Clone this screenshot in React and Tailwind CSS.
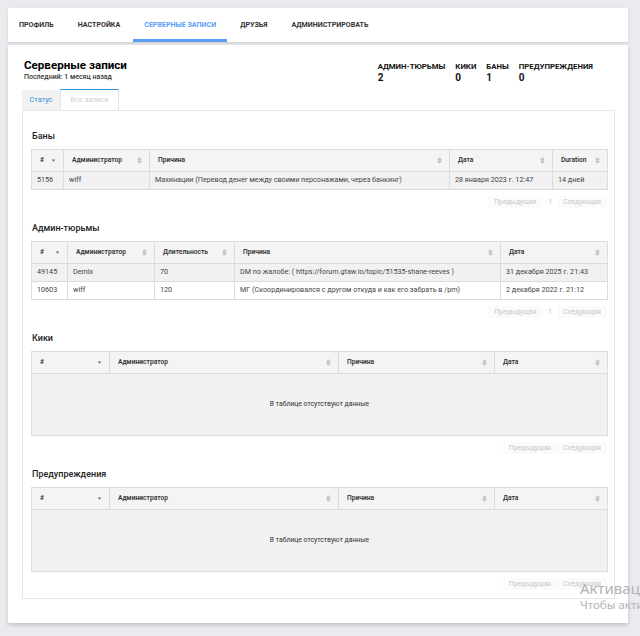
import React from 'react';

const SortBoth = () => (
  <svg width="5" height="7" viewBox="0 0 5 7" className="shrink-0">
    <path d="M2.5 0.7 L4.1 2.8 H0.9 Z" fill="none" stroke="#a0a0a0" strokeWidth="0.7" />
    <path d="M2.5 6.3 L4.1 4.2 H0.9 Z" fill="none" stroke="#a0a0a0" strokeWidth="0.7" />
  </svg>
);

const SortDown = () => (
  <svg width="5" height="7" viewBox="0 0 5 7" className="shrink-0">
    <path d="M0.8 2.6 H4.2 L2.5 4.8 Z" fill="#666" />
  </svg>
);

const DataTable = ({ columns, rows }) => {
  return (
    <table className="w-full table-fixed border-collapse border border-[#dcdcdc] text-[7.2px]">
      <thead className="bg-[#f4f4f4]">
        <tr className="h-[22px]">
          {columns.map((col, idx) => (
            <th
              key={col.label}
              style={{ width: col.w }}
              className="border border-[#dcdcdc] pl-[8px] pr-[7px] text-left text-[6.7px] font-semibold text-[#333]"
            >
              <div className="flex items-center justify-between">
                <span>{col.label}</span>
                {idx === 0 ? <SortDown /> : <SortBoth />}
              </div>
            </th>
          ))}
        </tr>
      </thead>
      <tbody>
        {rows.length === 0 ? (
          <tr className="h-[62px] bg-[#f1f1f1]">
            <td colSpan={columns.length} className="text-center text-[6.8px] text-[#333]">
              В таблице отсутствуют данные
            </td>
          </tr>
        ) : (
          rows.map((row, idx) => (
            <tr key={idx} className={idx % 2 === 0 ? 'h-[18px] bg-[#f1f1f1]' : 'h-[18px] bg-white'}>
              {row.map((cell, cIdx) => (
                <td key={cIdx} className="overflow-hidden whitespace-nowrap border border-[#dcdcdc] px-[5px] text-[#444]">
                  {cell}
                </td>
              ))}
            </tr>
          ))
        )}
      </tbody>
    </table>
  );
};

const Pager = ({ showPage }) => (
  <div className="mt-[6px] flex h-[12px] justify-end gap-[1px] text-[6.8px] text-[#c6c6c6]">
    <span className="flex items-center bg-[#fbfbfb] px-[6px]">Предыдущая</span>
    {showPage && <span className="flex items-center bg-white px-[5px]">1</span>}
    <span className="flex items-center bg-[#fbfbfb] px-[5px]">Следующая</span>
  </div>
);

const Section = ({ title, columns, rows, first }) => (
  <div className={first ? '' : 'mt-[13px]'}>
    <div className="mb-[6px] h-[14px] pl-[1px] text-[9px] font-medium leading-[14px] text-[#222]">{title}</div>
    <DataTable columns={columns} rows={rows} />
    <Pager showPage={rows.length > 0} />
  </div>
);

const navItems = ['Профиль', 'Настройка', 'Серверные записи', 'Друзья', 'Администрировать'];

const stats = [
  { label: 'Админ-тюрьмы', value: 2 },
  { label: 'Кики', value: 0 },
  { label: 'Баны', value: 1 },
  { label: 'Предупреждения', value: 0 },
];

export default function App() {
  return (
    <div
      className="relative h-[636px] w-[640px] overflow-hidden bg-[#eaebef] pl-[8px] pt-[8px]"
      style={{ fontFamily: 'Roboto, "Noto Sans", sans-serif' }}
    >
      <div className="w-[620px]">
        <nav className="flex h-[34px] gap-[2px] bg-white shadow-sm">
          {navItems.map((item) => (
            <div
              key={item}
              className={
                item === 'Серверные записи'
                  ? 'flex items-center border-b-[3px] border-[#5b9cf7] px-[11px] pt-[3px] text-[7.1px] font-bold uppercase text-[#5b9cf7]'
                  : 'flex items-center border-b-[3px] border-transparent px-[11px] pt-[3px] text-[7.1px] font-bold uppercase text-[#333]'
              }
            >
              {item}
            </div>
          ))}
        </nav>

        <div className="mt-[3px] h-[578px] bg-white px-[14px] pt-[13px] shadow-[0_2px_4px_rgba(0,0,0,0.18)]">
          <div className="flex justify-between pr-[21px]">
            <div className="pl-[2px]">
              <h1 className="text-[11.6px] font-bold leading-[15px] text-black">Серверные записи</h1>
              <p className="text-[7px] font-medium leading-[9px] text-[#333]">Последний: 1 месяц назад</p>
            </div>
            <div className="flex gap-[10px] pt-[4px]">
              {stats.map((s) => (
                <div key={s.label} className="text-[#111]">
                  <div className="text-[7.8px] font-bold uppercase leading-[10px]">{s.label}</div>
                  <div className="text-[10px] font-bold leading-[12px]">{s.value}</div>
                </div>
              ))}
            </div>
          </div>

          <div className="mt-[5px] flex h-[21px] items-end">
            <div className="flex h-[20px] w-[38px] items-center justify-center bg-[#f2f2f2] text-[7.3px] text-[#3a8fd8]">
              Статус
            </div>
            <div className="flex h-[21px] w-[59px] items-center justify-center border-x border-t border-[#e3e3e3] border-t-[#2b93dc] bg-white text-[7.3px] text-[#cfcfcf]">
              Все записи
            </div>
          </div>

          <div className="w-[593px] border border-[#e6e6e6] px-[8px] pb-[8px] pt-[18px]">
            <Section
              first
              title="Баны"
              columns={[
                { label: '#', w: 32 },
                { label: 'Администратор', w: 86 },
                { label: 'Причина', w: 300 },
                { label: 'Дата', w: 103 },
                { label: 'Duration', w: 55 },
              ]}
              rows={[
                ['5156', 'wiff', 'Махинации (Перевод денег между своими персонажами, через банкинг)', '28 января 2023 г. 12:47', '14 дней'],
              ]}
            />
            <Section
              title="Админ-тюрьмы"
              columns={[
                { label: '#', w: 36 },
                { label: 'Администратор', w: 87 },
                { label: 'Длительность', w: 80 },
                { label: 'Причина', w: 266 },
                { label: 'Дата', w: 107 },
              ]}
              rows={[
                ['49145', 'Demix', '70', 'DM по жалобе: ( https://forum.gtaw.io/topic/51535-shane-reeves )', '31 декабря 2025 г. 21:43'],
                ['10603', 'wiff', '120', 'МГ (Скоординировался с другом откуда и как его забрать в /pm)', '2 декабря 2022 г. 21:12'],
              ]}
            />
            <Section
              title="Кики"
              columns={[
                { label: '#', w: 78 },
                { label: 'Администратор', w: 229 },
                { label: 'Причина', w: 156 },
                { label: 'Дата', w: 113 },
              ]}
              rows={[]}
            />
            <Section
              title="Предупреждения"
              columns={[
                { label: '#', w: 78 },
                { label: 'Администратор', w: 229 },
                { label: 'Причина', w: 156 },
                { label: 'Дата', w: 113 },
              ]}
              rows={[]}
            />
          </div>
        </div>
      </div>

      <div className="absolute left-[580px] top-[579px] whitespace-nowrap text-[#b3b3b3]" style={{ fontFamily: '"Noto Sans", "Open Sans", sans-serif' }}>
        <div className="text-[15px] leading-[18px]">Активация Windows</div>
        <div className="text-[11.5px] leading-[16px]">Чтобы активировать Windows</div>
      </div>
    </div>
  );
}
